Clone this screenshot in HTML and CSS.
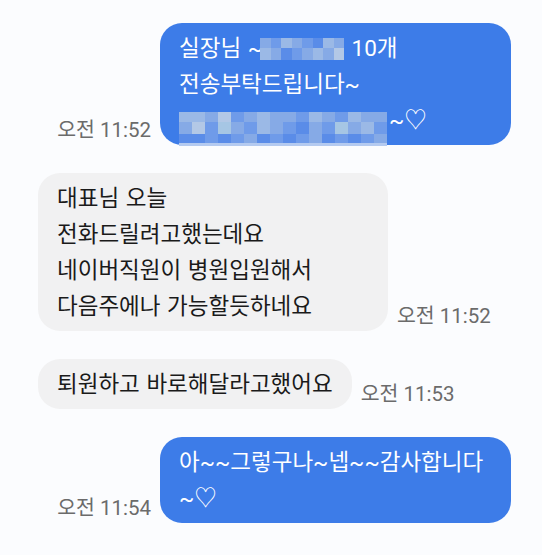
FILE: index.html
```html
<!DOCTYPE html>
<html lang="ko">
<head>
  <meta charset="UTF-8">
  <meta name="viewport" content="width=device-width, initial-scale=1.0">
  <title>대화</title>
  <link rel="stylesheet" href="styles.css">
</head>
<body>
  <div class="chat">
    <div class="row out">
      <span class="time">오전 11:52</span>
      <div class="bubble">
        실장님 ~<span class="blur blur-short">
          <i class="b"></i><i class="a"></i><i class="c"></i><i class="b"></i><i class="a"></i><i class="d"></i><i class="c"></i><i class="b"></i>
          <i class="c"></i><i class="b"></i><i class="d"></i><i class="a"></i><i class="b"></i><i class="c"></i><i class="b"></i><i class="e"></i>
        </span> 10개<br>전송부탁드립니다~<br><span class="blur blur-long">
          <i class="c"></i><i class="c"></i><i class="b"></i><i class="e"></i><i class="a"></i><i class="b"></i><i class="c"></i><i class="b"></i><i class="b"></i><i class="a"></i><i class="c"></i><i class="b"></i><i class="a"></i><i class="c"></i><i class="b"></i><i class="b"></i>
          <i class="b"></i><i class="e"></i><i class="a"></i><i class="f"></i><i class="b"></i><i class="a"></i><i class="c"></i><i class="b"></i><i class="a"></i><i class="d"></i><i class="b"></i><i class="a"></i><i class="f"></i><i class="b"></i><i class="c"></i><i class="a"></i>
          <i class="d"></i><i class="d"></i><i class="a"></i><i class="d"></i><i class="a"></i><i class="b"></i><i class="d"></i><i class="a"></i><i class="d"></i><i class="a"></i><i class="b"></i><i class="d"></i><i class="a"></i><i class="d"></i><i class="a"></i><i class="b"></i>
        </span>~♡
      </div>
    </div>

    <div class="row in">
      <div class="bubble wide">대표님 오늘<br>전화드릴려고했는데요<br>네이버직원이 병원입원해서<br>다음주에나 가능할듯하네요</div>
      <span class="time">오전 11:52</span>
    </div>

    <div class="row in">
      <div class="bubble">퇴원하고 바로해달라고했어요</div>
      <span class="time">오전 11:53</span>
    </div>

    <div class="row out">
      <span class="time">오전 11:54</span>
      <div class="bubble">아~~그렇구나~넵~~감사합니다<br>~♡</div>
    </div>
  </div>
</body>
</html>
```

FILE: styles.css
```css
body {
  margin: 0;
  background-color: #fbfcfe;
  font-family: Roboto, "Noto Sans CJK KR", sans-serif;
}

.chat {
  display: flex;
  flex-direction: column;
  gap: 28px;
  padding: 23px 31px 0 38px;
}

.row {
  display: flex;
  align-items: flex-end;
  gap: 9px;
}

.row.out {
  justify-content: flex-end;
}

.bubble {
  padding: 7px 19px;
  border-radius: 22px;
  font-size: 22.5px;
  line-height: 36px;
  word-spacing: 1px;
  box-sizing: border-box;
}

.out .bubble {
  width: 351px;
  background-color: #3d7ce8;
  color: #fff;
}

.in .bubble {
  background-color: #f1f1f2;
  color: #1a1a1a;
}

.in .bubble.wide {
  width: 350px;
}

.time {
  margin-bottom: 3px;
  font-size: 20.5px;
  line-height: 24px;
  color: #6b6b6b;
  white-space: nowrap;
}

/* pixelated (censored) parts */
.blur {
  display: inline-grid;
  vertical-align: top;
}

.blur-short {
  grid-template-columns: repeat(8, 10.5px);
  grid-template-rows: 10px 12px;
  margin: 8px 1px 0 -3px;
}

.blur-long {
  grid-template-columns: repeat(16, 13px);
  grid-template-rows: 10px 12px 9px;
  margin: 10px 2px -10px 0;
  border-bottom: 3px solid #b4caf0;
}

.blur i { display: block; }
.blur .a { background-color: #6f9be9; }
.blur .b { background-color: #86aae6; }
.blur .c { background-color: #9bb9e6; }
.blur .d { background-color: #5a8ce8; }
.blur .e { background-color: #b3c8e6; }
.blur .f { background-color: #a6c6e4; }
```
